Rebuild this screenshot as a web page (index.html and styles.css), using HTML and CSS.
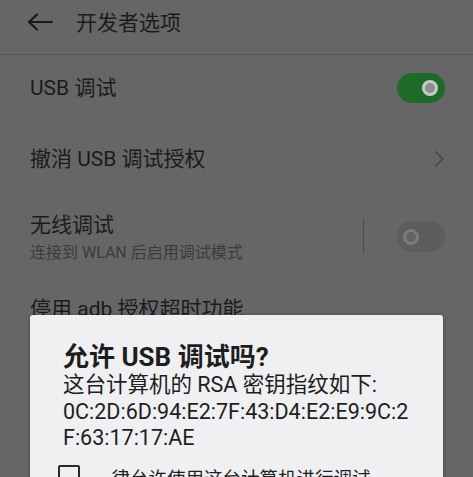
FILE: index.html
```html
<!DOCTYPE html>
<html lang="zh-CN">
<head>
<meta charset="utf-8">
<title>开发者选项</title>
<link rel="stylesheet" href="styles.css">
</head>
<body>
<div class="screen">
  <header class="topbar">
    <svg class="back" width="26" height="18" viewBox="0 0 26 18">
      <path d="M2 9 H25 M10 1.5 L2 9 L10 16.5" fill="none" stroke="#1a1a1a" stroke-width="2.2" stroke-linecap="round" stroke-linejoin="round"/>
    </svg>
    <h1 class="title">开发者选项</h1>
  </header>

  <div class="row row-usb">
    <span class="label">USB 调试</span>
    <span class="switch on"><span class="knob"></span></span>
  </div>

  <div class="row row-revoke">
    <span class="label">撤消 USB 调试授权</span>
    <svg class="chev" width="10" height="18" viewBox="0 0 10 18">
      <path d="M1.5 1.5 L8.5 9 L1.5 16.5" fill="none" stroke="#474747" stroke-width="1.6"/>
    </svg>
  </div>

  <div class="row row-wireless">
    <div class="texts">
      <div class="label">无线调试</div>
      <div class="sub">连接到 WLAN 后启用调试模式</div>
    </div>
    <span class="vdiv"></span>
    <span class="switch off"><span class="knob"></span></span>
  </div>

  <div class="row row-adb">
    <span class="label">停用 adb 授权超时功能</span>
  </div>
</div>

<div class="dialog">
  <div class="d-title">允许 USB 调试吗?</div>
  <div class="d-body">
    <div>这台计算机的 RSA 密钥指纹如下:</div>
    <div>0C:2D:6D:94:E2:7F:43:D4:E2:E9:9C:2</div>
    <div>F:63:17:17:AE</div>
  </div>
  <div class="d-check">
    <span class="box"></span>
    <span class="check-label">一律允许使用这台计算机进行调试</span>
  </div>
</div>
</body>
</html>
```

FILE: styles.css
```css
html, body {
  margin: 0;
  padding: 0;
}
body {
  width: 473px;
  height: 477px;
  overflow: hidden;
  background: #666666;
  font-family: "Roboto", "Noto Sans CJK SC", sans-serif;
  color: #1b1b1b;
  position: relative;
}
.screen {
  display: flex;
  flex-direction: column;
}
.topbar {
  height: 54px;
  display: flex;
  align-items: center;
  padding-left: 27px;
  border-bottom: 1.5px solid #565656;
}
.back {
  display: block;
  margin-top: -10px;
}
.title {
  margin: -9px 0 0 23px;
  font-size: 21px;
  font-weight: 400;
  line-height: 28px;
  color: #1b1b1b;
}
.row {
  display: flex;
  align-items: center;
  padding: 0 28px 0 30px;
}
.label {
  font-size: 21px;
  line-height: 28px;
  flex: 1;
}
.row-usb {
  height: 66px;
}
.row-revoke {
  height: 70px;
  padding-top: 3px;
}
.row-wireless {
  height: 80px;
  padding-top: 2px;
}
.texts {
  flex: 1;
  display: flex;
  flex-direction: column;
  margin-top: 3px;
}
.sub {
  font-size: 16px;
  line-height: 22px;
  margin-top: 3px;
  color: #3b3b3b;
}
.row-adb {
  height: 56px;
  padding-top: 5px;
}
.chev {
  display: block;
  margin-right: 1px;
}
.vdiv {
  width: 1.5px;
  height: 35px;
  background: #4d4d4d;
  margin-right: 33px;
  margin-top: 0;
}
.switch {
  width: 48px;
  height: 30px;
  border-radius: 15px;
  position: relative;
  flex: none;
}
.switch.on {
  background: #1d6a29;
}
.switch.off {
  background: #5d5d5d;
  height: 31px;
  margin-top: 0;
}
.knob {
  position: absolute;
  top: 7px;
  width: 16px;
  height: 16px;
  border-radius: 50%;
  box-sizing: border-box;
}
.switch.on .knob {
  left: 25px;
  border: 3px solid #c9c9c9;
  background: #8d8d8d;
}
.switch.off .knob {
  left: 6px;
  top: 8px;
  border: 3px solid #7b7b7b;
  background: #626262;
}
.dialog {
  position: absolute;
  left: 30px;
  top: 315px;
  width: 413px;
  height: 200px;
  background: #f0f0f2;
  border-radius: 3px;
  box-shadow: 0 1px 4px rgba(0, 0, 0, 0.35);
  box-sizing: border-box;
  padding: 27px 20px 0 33px;
  color: #1e1e1e;
}
.d-title {
  font-size: 26px;
  font-weight: 700;
  line-height: 30px;
}
.d-body {
  font-size: 21.5px;
  line-height: 26.5px;
}
.d-check {
  display: flex;
  align-items: flex-start;
  margin-top: 13px;
  margin-left: -5px;
}
.box {
  width: 22px;
  height: 22px;
  box-sizing: border-box;
  border: 2.5px solid #2a2a2a;
  border-radius: 2px;
  flex: none;
}
.check-label {
  margin-left: 13px;
  font-size: 18.5px;
  line-height: 24px;
  margin-top: 2px;
}
```
